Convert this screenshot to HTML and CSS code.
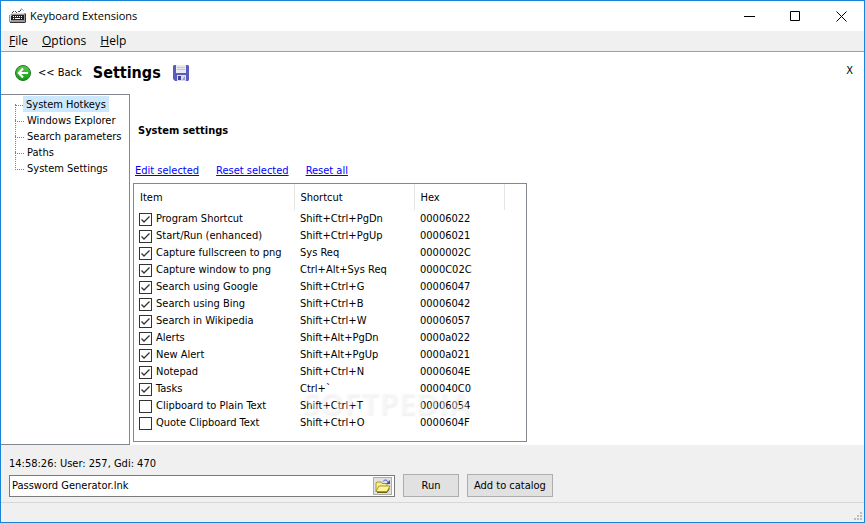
FILE: index.html
```
<!DOCTYPE html>
<html lang="en">
<head>
  <meta charset="UTF-8" />
  <title>Keyboard Extensions</title>
  <link rel="stylesheet" href="styles.css">
</head>
<body>
  <div class="window">
    <header class="titlebar">
      <svg class="app-icon" width="18" height="18" viewBox="0 0 18 18" shape-rendering="crispEdges">
        <path d="M3 5h1v-1h2v1h3v-1h2v-1h2" fill="none" stroke="#444" stroke-dasharray="1 1" />
        <path d="M12 1h1v1h-1zM11 2h3v1h-3zM14 3h1v1h-1z" fill="#d8c800" />
        <path d="M2 6h14l1 1v8l-1 1H1l-1-1V9z" fill="#9a9a9a" />
        <path d="M2 6h13v1H2zM1 7h1v7H1z" fill="#dcdcdc" />
        <path d="M3 8h12v5H2V9z" fill="#222" />
        <path d="M4 9h1v1H4zM6 9h1v1H6zM8 9h1v1H8zM10 9h1v1h-1zM12 9h1v1h-1zM4 11h1v1H4zM6 11h5v1H6zM12 11h1v1h-1z" fill="#fff" />
        <path d="M1 15h15v1H1zM16 7h1v8h-1z" fill="#333" />
      </svg>
      <span class="titlebar-text">Keyboard Extensions</span>
      <div class="window-buttons">
        <button type="button" aria-label="Minimize">
          <svg width="11" height="11" viewBox="0 0 11 11"><path d="M0 5.5h11" stroke="#000" /></svg>
        </button>
        <button type="button" aria-label="Maximize">
          <svg width="10" height="10" viewBox="0 0 10 10"><path d="M.5.5h9v9h-9z" fill="none" stroke="#000" /></svg>
        </button>
        <button type="button" aria-label="Close">
          <svg width="11" height="11" viewBox="0 0 11 11"><path d="M.5.5l10 10M10.5.5l-10 10" stroke="#000" /></svg>
        </button>
      </div>
    </header>

    <nav class="menubar">
      <button type="button"><u>F</u>ile</button>
      <button type="button"><u>O</u>ptions</button>
      <button type="button"><u>H</u>elp</button>
    </nav>

    <div class="toolbar">
      <button type="button" class="back">
        <svg width="16" height="16" viewBox="0 0 16 16">
          <defs>
            <linearGradient id="green" x1="0" y1="0" x2="0" y2="1">
              <stop offset="0" stop-color="#5cc850" />
              <stop offset="1" stop-color="#109a10" />
            </linearGradient>
          </defs>
          <circle cx="8" cy="8" r="7.5" fill="url(#green)" stroke="#1c7a1c" />
          <path d="M8 3.5L3.8 8 8 12.5M4.2 8H13" fill="none" stroke="#fff" stroke-width="2.2" />
        </svg>
        <span>&lt;&lt; Back</span>
      </button>
      <h1>Settings</h1>
      <button type="button" class="save" aria-label="Save">
        <svg width="16" height="16" viewBox="0 0 16 16">
          <path d="M1 0h14l1 1v14l-1 1H2l-2-2V1z" fill="#5a5abf" />
          <path d="M3 0h10v8H3z" fill="#e9e9f2" />
          <path d="M4 2.5h8M4 4.5h8" stroke="#c4c4d2" />
          <path d="M4 10h9v6H4z" fill="#dcdcea" />
          <path d="M5 11h3v4H5z" fill="#40409c" />
          <path d="M9 15l3-4v4z" fill="#9a9ad0" />
        </svg>
      </button>
      <button type="button" class="close-page" aria-label="Close settings">X</button>
    </div>

    <main class="content">
      <ul class="tree">
        <li class="selected"><a href="#">System Hotkeys</a></li>
        <li><a href="#">Windows Explorer</a></li>
        <li><a href="#">Search parameters</a></li>
        <li><a href="#">Paths</a></li>
        <li><a href="#">System Settings</a></li>
      </ul>

      <section class="panel">
        <h2>System settings</h2>
        <div class="links">
          <a href="#">Edit selected</a>
          <a href="#">Reset selected</a>
          <a href="#">Reset all</a>
        </div>
        <div class="list">
          <table>
            <thead>
              <tr><th class="col-item">Item</th><th class="col-shortcut">Shortcut</th><th class="col-hex">Hex</th></tr>
            </thead>
            <tbody>
              <tr><td><label><input type="checkbox" checked>Program Shortcut</label></td><td>Shift+Ctrl+PgDn</td><td>00006022</td></tr>
              <tr><td><label><input type="checkbox" checked>Start/Run (enhanced)</label></td><td>Shift+Ctrl+PgUp</td><td>00006021</td></tr>
              <tr><td><label><input type="checkbox" checked>Capture fullscreen to png</label></td><td>Sys Req</td><td>0000002C</td></tr>
              <tr><td><label><input type="checkbox" checked>Capture window to png</label></td><td>Ctrl+Alt+Sys Req</td><td>0000C02C</td></tr>
              <tr><td><label><input type="checkbox" checked>Search using Google</label></td><td>Shift+Ctrl+G</td><td>00006047</td></tr>
              <tr><td><label><input type="checkbox" checked>Search using Bing</label></td><td>Shift+Ctrl+B</td><td>00006042</td></tr>
              <tr><td><label><input type="checkbox" checked>Search in Wikipedia</label></td><td>Shift+Ctrl+W</td><td>00006057</td></tr>
              <tr><td><label><input type="checkbox" checked>Alerts</label></td><td>Shift+Alt+PgDn</td><td>0000a022</td></tr>
              <tr><td><label><input type="checkbox" checked>New Alert</label></td><td>Shift+Alt+PgUp</td><td>0000a021</td></tr>
              <tr><td><label><input type="checkbox" checked>Notepad</label></td><td>Shift+Ctrl+N</td><td>0000604E</td></tr>
              <tr><td><label><input type="checkbox" checked>Tasks</label></td><td>Ctrl+`</td><td>000040C0</td></tr>
              <tr><td><label><input type="checkbox">Clipboard to Plain Text</label></td><td>Shift+Ctrl+T</td><td>00006054</td></tr>
              <tr><td><label><input type="checkbox">Quote Clipboard Text</label></td><td>Shift+Ctrl+O</td><td>0000604F</td></tr>
            </tbody>
          </table>
          <div class="watermark">SOFTPEDIA</div>
        </div>
      </section>
    </main>

    <footer class="launcher">
      <label for="command">14:58:26: User: 257, Gdi: 470</label>
      <div class="launcher-row">
        <div class="command-box">
          <input type="text" id="command" value="Password Generator.lnk">
          <button type="button" class="browse" aria-label="Browse">
            <svg width="16" height="14" viewBox="0 0 16 14">
              <path d="M1 12.500V4l1-1h4l1 1.500h5V7" fill="#f8ee98" stroke="#a89828" />
              <path d="M1 12.500L4 7h11l-3 5.500z" fill="#fff59a" stroke="#a89828" />
              <path d="M2 13.500h10l2.500-4" fill="none" stroke="#6e6410" />
              <path d="M8 2.500c1.500-2 4-2 5 .5" fill="none" stroke="#3c4cc0" />
              <path d="M15 1v4h-4z" fill="#3c4cc0" />
            </svg>
          </button>
        </div>
        <button type="button" class="btn btn-run">Run</button>
        <button type="button" class="btn btn-add">Add to catalog</button>
      </div>
    </footer>

    <div class="statusbar">
      <svg width="8" height="8" viewBox="0 0 8 8" shape-rendering="crispEdges">
        <path d="M6 0h2v2H6zM3 3h2v2H3zM6 3h2v2H6zM0 6h2v2H0zM3 6h2v2H3zM6 6h2v2H6z" fill="#bcbcbc" />
      </svg>
    </div>
  </div>
</body>
</html>
```
FILE: styles.css
```
* {
  box-sizing: border-box;
}

body {
  margin: 0;
  font-family: "DejaVu Sans Condensed", "DejaVu Sans", sans-serif;
  font-size: 11px;
  line-height: 16px;
  color: #000;
}

button {
  margin: 0;
  padding: 0;
  border: none;
  background: none;
  font: inherit;
  color: inherit;
}

svg {
  display: block;
}

.window {
  display: flex;
  flex-direction: column;
  min-height: 100vh;
  border: 1px solid #1883d7;
  background: #fff;
}

/* title bar and menu */
.titlebar {
  display: flex;
  align-items: center;
  height: 30px;
  padding-left: 8px;
  font-family: "Open Sans", sans-serif;
}

.titlebar-text {
  margin-left: 3px;
}

.window-buttons {
  display: flex;
  margin-left: auto;
}

.window-buttons button {
  display: flex;
  justify-content: center;
  align-items: center;
  width: 46px;
  height: 28px;
}

.menubar {
  display: flex;
  gap: 14px;
  height: 21px;
  padding: 0 8px;
  background: #f0f0f0;
  border-bottom: 1px solid #a0a0a0;
  font-family: "Open Sans", sans-serif;
  font-size: 12px;
}

.toolbar {
  display: flex;
  align-items: center;
  height: 42px;
  padding: 0 11px 0 14px;
}

.back {
  display: flex;
  align-items: center;
  gap: 7px;
}

h1 {
  margin: 0 12px 0 11px;
  font-size: 16px;
  line-height: 20px;
}

.close-page {
  margin-left: auto;
  padding-bottom: 4px;
}

/* tree on the left, settings on the right */
.content {
  display: flex;
  flex: 1;
}

.tree {
  flex: 0 0 129px;
  margin: 0;
  padding: 1px 0 0 14px;
  border: 1px solid #828790;
  border-left: none;
  list-style: none;
}

.tree li {
  display: flex;
  height: 16px;
}

.tree li::before {
  content: "";
  width: 8px;
  height: 9px;
  border-left: 1px dotted #808080;
  border-bottom: 1px dotted #808080;
}

.tree li + li::before {
  height: 17px;
  margin-top: -8px;
}

.tree li:first-child::before {
  border-left: none;
}

.tree a {
  height: 16px;
  padding: 0 3px;
  color: inherit;
  line-height: 18px;
  text-decoration: none;
  white-space: nowrap;
}

.tree .selected a {
  background: #cce8ff;
}

.panel {
  padding: 29px 3px 3px;
}

h2 {
  margin: 0 5px 24px;
  font-size: 11px;
  line-height: 16px;
}

.links {
  display: flex;
  gap: 17px;
  margin: 0 2px 4px;
}

.links a {
  color: #0000ff;
}

.list {
  position: relative;
  padding: 0 21px 10px 0;
  border: 1px solid #828790;
}

table {
  border-collapse: collapse;
}

th,
td {
  padding: 1px 0 0 6px;
  text-align: left;
  font-weight: normal;
  line-height: 16px;
  white-space: nowrap;
}

th {
  height: 26px;
  border-right: 1px solid #e5e5e5;
}

.col-item {
  width: 160px;
}

.col-shortcut {
  width: 120px;
}

.col-hex {
  width: 90px;
}

td:first-child {
  padding-left: 5px;
}

td label {
  display: flex;
  align-items: center;
  gap: 4px;
}

td input {
  appearance: none;
  width: 13px;
  height: 13px;
  margin: 0;
  border: 1px solid #333;
  background: #fff;
}

td input:checked {
  background: url("data:image/svg+xml,%3Csvg xmlns='http://www.w3.org/2000/svg' viewBox='0 0 11 11'%3E%3Cpath d='M1.500 5.500l2.500 2.500 5.500-5.500' fill='none' stroke='%23333' stroke-width='1.300'/%3E%3C/svg%3E") center / 11px 11px no-repeat;
}

.watermark {
  position: absolute;
  left: 168px;
  bottom: 23px;
  color: rgba(255, 255, 255, 0.4);
  font: bold 31px/32px "Open Sans", sans-serif;
  text-shadow: 1px 2px 2px rgba(0, 0, 0, 0.06);
  pointer-events: none;
}

/* launcher at the bottom */
.launcher {
  padding: 11px 8px 5px;
  background: #f0f0f0;
}

.launcher label {
  display: block;
  margin-bottom: 2px;
}

.launcher-row {
  display: flex;
  align-items: flex-end;
  gap: 8px;
}

.command-box {
  display: flex;
  flex: 0 1 386px;
  height: 22px;
  padding: 1px 2px;
  border: 1px solid #7a7a7a;
  background: #fff;
}

.command-box input {
  flex: 1;
  min-width: 0;
  padding: 0;
  border: none;
  outline: none;
  background: none;
  font: inherit;
}

.browse {
  display: flex;
  justify-content: center;
  align-items: center;
  width: 19px;
  border: 1px solid #adadad;
  background: #e1e1e1;
}

.btn {
  height: 23px;
  padding: 0 7px;
  border: 1px solid #adadad;
  background: #e1e1e1;
  white-space: nowrap;
}

.btn-run {
  width: 56px;
}

.btn-add {
  padding: 0 6px;
}

.statusbar {
  display: flex;
  justify-content: flex-end;
  align-items: flex-end;
  height: 20px;
  padding: 2px;
  background: #f0f0f0;
  border-top: 1px solid #d7d7d7;
}
```
